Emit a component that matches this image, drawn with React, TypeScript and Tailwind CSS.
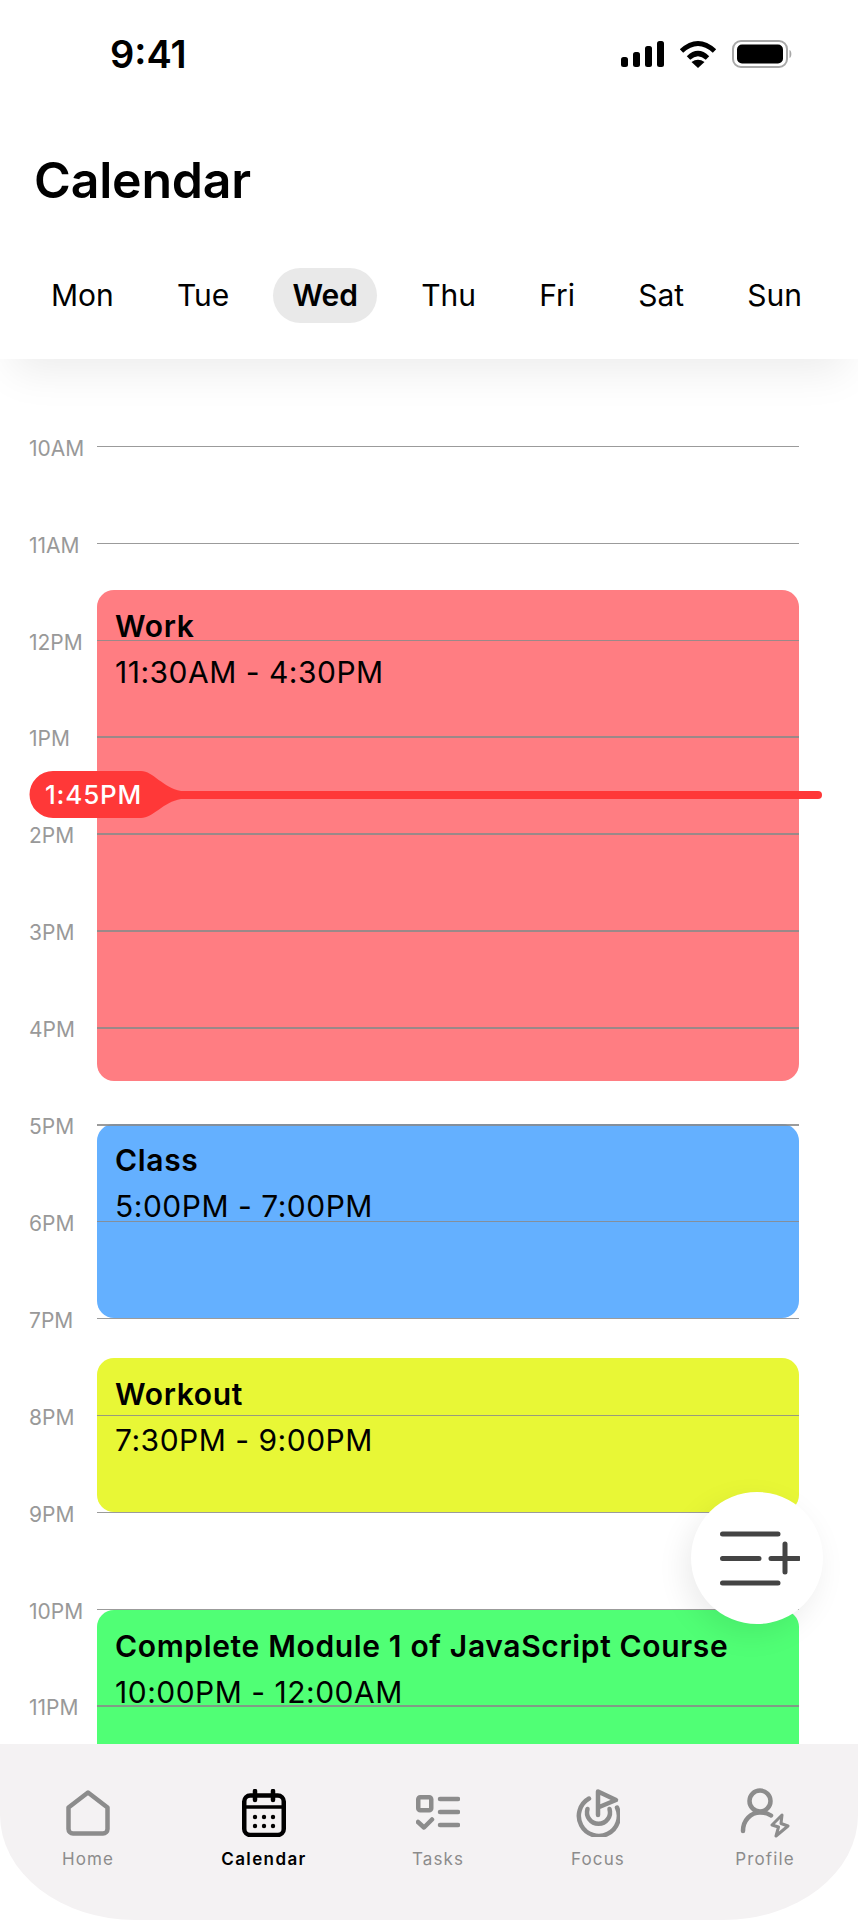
const hours = ["10AM","11AM","12PM","1PM","2PM","3PM","4PM","5PM","6PM","7PM","8PM","9PM","10PM","11PM"];
const days = ["Mon","Tue","Wed","Thu","Fri","Sat","Sun"];

function Signal() {
  return (
    <svg width="43" height="26" viewBox="0 0 43 26" fill="#000">
      <rect x="0" y="16" width="7" height="10" rx="2.5" />
      <rect x="12" y="11" width="7" height="15" rx="2.5" />
      <rect x="24" y="5" width="7" height="21" rx="2.5" />
      <rect x="36" y="0" width="7" height="26" rx="2.5" />
    </svg>
  );
}
function Wifi() {
  return (
    <svg width="38" height="28" viewBox="0 0 38 28" fill="none" stroke="#000">
      <path d="M2.5 11 Q19 -4 35.5 11" strokeWidth="5" />
      <path d="M9.5 18 Q19 9 28.5 18" strokeWidth="5" />
      <path d="M12.5 22 Q19 17.5 25.5 22 L19 28 Z" fill="#000" stroke="none" />
    </svg>
  );
}
function Battery() {
  return (
    <svg width="60" height="28" viewBox="0 0 60 28">
      <rect x="1" y="1" width="54" height="26" rx="8" fill="none" stroke="#a8a8a8" strokeWidth="2" />
      <rect x="5" y="4.5" width="46" height="19" rx="5" fill="#000" />
      <path d="M57.5 10 C60 11 60 17 57.5 18 Z" fill="#a8a8a8" />
    </svg>
  );
}
const g = "#8c8c8c";
function HomeIcon() {
  return (
    <svg width="44" height="46" viewBox="0 0 44 46" fill="none" stroke={g} strokeWidth="4.5" strokeLinejoin="round">
      <path d="M22 2.5 L41.5 17.5 V39 a4.5 4.5 0 0 1 -4.5 4.5 H7 a4.5 4.5 0 0 1 -4.5 -4.5 V17.5 Z" />
    </svg>
  );
}
function CalendarIcon() {
  return (
    <svg width="44" height="48" viewBox="0 0 44 48" fill="none" stroke="#000" strokeWidth="4.5" strokeLinecap="round">
      <rect x="2.25" y="6.5" width="39.5" height="39.5" rx="6" />
      <path d="M13 2 V11 M31 2 V11" />
      <path d="M2.25 18 H41.75" strokeWidth="3.5" />
      <g fill="#000" stroke="none">
        <circle cx="13" cy="28" r="2.2" /><circle cx="22" cy="28" r="2.2" /><circle cx="31" cy="28" r="2.2" />
        <circle cx="13" cy="37" r="2.2" /><circle cx="22" cy="37" r="2.2" /><circle cx="31" cy="37" r="2.2" />
      </g>
    </svg>
  );
}
function TasksIcon() {
  return (
    <svg width="44" height="36" viewBox="0 0 44 36" fill="none" stroke={g} strokeWidth="4.5" strokeLinecap="round" strokeLinejoin="round">
      <rect x="2.25" y="2.25" width="13" height="13" rx="2" />
      <path d="M24 4 H42 M24 17 H42 M24 30 H42" />
      <path d="M2 27 L8 32.5 L16 24.5" />
    </svg>
  );
}
function FocusIcon() {
  return (
    <svg width="44" height="48" viewBox="0 0 44 48" fill="none" stroke={g} strokeWidth="4.5" strokeLinecap="round" strokeLinejoin="round">
      <path d="M13 9.5 A20 20 0 1 0 41 18.5" />
      <path d="M11.5 20 A11.5 11.5 0 1 0 33.5 20" />
      <path d="M22 26 V2.5 L40 11 L22 18.5" />
    </svg>
  );
}
function ProfileIcon() {
  return (
    <svg width="50" height="50" viewBox="0 0 50 50" fill="none" stroke={g} strokeLinecap="round" strokeLinejoin="round">
      <circle cx="20" cy="13" r="10.5" strokeWidth="4.5" />
      <path d="M3 43 C3 32 11 24.5 20 24.5 C24 24.5 28 25.5 31 27.5" strokeWidth="4.5" />
      <path d="M42 27 L32 37 L38.5 39 L36 48 L48 38 L41 35.5 Z" strokeWidth="3" />
    </svg>
  );
}

function Card({ top, height, color, title, time }: { top: number; height: number; color: string; title: string; time: string }) {
  return (
    <div className={`absolute left-[97px] w-[702px] rounded-[17px] pl-[18px] pt-[13px] text-black ${color}`} style={{ top, height }}>
      <div className="text-[30px] leading-[46px] font-semibold tracking-[0.65px]">{title}</div>
      <div className="text-[30px] leading-[46px] font-normal tracking-[0.5px]">{time}</div>
    </div>
  );
}

export default function App() {
  return (
    <div className="relative flex h-[1920px] w-[858px] flex-col overflow-hidden bg-white font-['Inter',sans-serif] text-black">
      <header className="relative z-20 h-[359px] shrink-0 bg-white shadow-[0_24px_40px_-12px_rgba(0,0,0,0.08)]">
        <div className="flex items-center justify-between pl-[110px] pr-[66px] pt-[32px]">
          <span className="text-[38px] leading-[44px] font-semibold">9:41</span>
          <div className="flex items-center gap-[15px]">
            <Signal />
            <Wifi />
            <Battery />
          </div>
        </div>
        <h1 className="mt-[76px] pl-[34px] text-[50px] leading-[56px] font-semibold tracking-[-0.2px]">Calendar</h1>
        <div className="mt-[60px] flex items-center justify-between pl-[51px] pr-[56px]">
          {days.map((d) =>
            d === "Wed" ? (
              <span key={d} className="-mx-[19px] flex h-[55px] items-center rounded-full bg-[#e9e9e9] px-[19px] text-[30px] font-semibold">{d}</span>
            ) : (
              <span key={d} className="flex h-[55px] items-center text-[30px]">{d}</span>
            )
          )}
        </div>
      </header>

      <main className="relative min-h-0 flex-1 overflow-hidden bg-white pt-[39px]">
        <Card top={231} height={491} color="bg-[#ff7d82]" title="Work" time="11:30AM - 4:30PM" />
        <Card top={765} height={194} color="bg-[#64b0ff]" title="Class" time="5:00PM - 7:00PM" />
        <Card top={999} height={154} color="bg-[#e8f736]" title="Workout" time="7:30PM - 9:00PM" />
        <Card top={1251} height={220} color="bg-[#50ff75]" title="Complete Module 1 of JavaScript Course" time="10:00PM - 12:00AM" />

        <div className="relative">
          {hours.map((h) => (
            <div key={h} className="flex h-[96.92px] items-center pr-[59px]">
              <span className="w-[97px] pl-[29px] pt-[4px] text-[21px] text-[#999999]">{h}</span>
              <div className="h-[1.5px] flex-1 bg-[#8a8a8a]/85" />
            </div>
          ))}
        </div>

        <div className="absolute left-[29px] top-[412px] flex h-[48px] w-[793px] items-center">
          <svg className="absolute left-0 top-0" width="160" height="48" viewBox="0 0 160 48" fill="#ff3838">
            <path d="M24 0 H112 C124 0 134 17 152 20 L160 20 V28 L152 28 C134 31 124 47 112 47 H24 A23.5 23.5 0 0 1 24 0 Z" />
          </svg>
          <div className="ml-[150px] h-[8px] flex-1 rounded-r-full bg-[#ff3838]" />
          <span className="absolute left-[16px] top-0 text-[26px] leading-[47px] font-medium tracking-[0.8px] text-white">1:45PM</span>
        </div>

        <button className="absolute left-[691px] top-[1133px] z-10 flex h-[132px] w-[132px] items-center justify-center rounded-full bg-white shadow-[-6px_10px_30px_rgba(0,0,0,0.08)]">
          <svg className="ml-[6px] mt-[2px]" width="80" height="56" viewBox="0 0 80 56" fill="none" stroke="#444444" strokeWidth="5" strokeLinecap="round">
            <path d="M2.5 3 H58 M2.5 27.5 H39 M2.5 52 H58 M51 27.5 H79 M65 13 V41" />
          </svg>
        </button>
      </main>

      <nav className="relative z-20 h-[176px] shrink-0 rounded-b-[135px_105px] bg-[#f4f2f3]">
        <div className="grid grid-cols-[176px_176px_172px_148px_186px] pt-[44px]">
          {[
            { label: "Home", icon: <HomeIcon /> },
            { label: "Calendar", icon: <CalendarIcon />, active: true },
            { label: "Tasks", icon: <TasksIcon /> },
            { label: "Focus", icon: <FocusIcon /> },
            { label: "Profile", icon: <ProfileIcon /> },
          ].map((t) => (
            <div key={t.label} className="flex flex-col items-center">
              <div className="flex h-[50px] items-center justify-center">{t.icon}</div>
              <span className={`mt-[9px] text-[17px] leading-[24px] ${t.active ? "font-semibold tracking-[1.4px] text-black" : "tracking-[1.1px] text-[#8c8c8c]"}`}>{t.label}</span>
            </div>
          ))}
        </div>
      </nav>
    </div>
  );
}
